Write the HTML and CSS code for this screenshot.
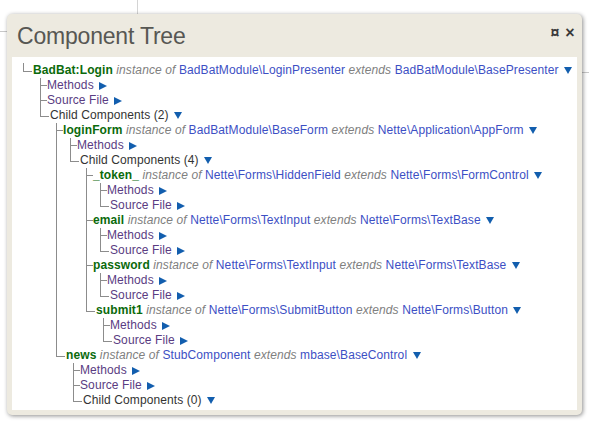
FILE: index.html
```html
<!DOCTYPE html>
<html>
<head>
<meta charset="utf-8">
<link rel="stylesheet" href="styles.css">
</head>
<body>
<div class="panel">
  <div class="head">
    <h1>Component Tree</h1>
    <div class="ctl"><a class="pin">¤</a><a class="close">×</a></div>
  </div>
  <div class="content">
    <ul class="tree root">
      <li class="last"><span class="c"></span><div class="b">
        <div class="l"><span class="n">BadBat:Login</span> <i>instance of</i> <span class="k">BadBatModule\LoginPresenter</span> <i>extends</i> <span class="k">BadBatModule\BasePresenter</span> <a class="t d"></a></div>
        <ul class="tree">
          <li><span class="c"></span><div class="b"><div class="l"><span class="m">Methods</span> <a class="t r"></a></div></div></li>
          <li><span class="c"></span><div class="b"><div class="l"><span class="m">Source File</span> <a class="t r"></a></div></div></li>
          <li class="last"><span class="c"></span><div class="b">
            <div class="l"><span class="cc">Child Components (2)</span> <a class="t d"></a></div>
            <ul class="tree sub">
              <li><span class="c"></span><div class="b">
                <div class="l"><span class="n">loginForm</span> <i>instance of</i> <span class="k">BadBatModule\BaseForm</span> <i>extends</i> <span class="k">Nette\Application\AppForm</span> <a class="t d"></a></div>
                <ul class="tree">
                  <li><span class="c"></span><div class="b"><div class="l"><span class="m">Methods</span> <a class="t r"></a></div></div></li>
                  <li class="last"><span class="c"></span><div class="b">
                    <div class="l"><span class="cc">Child Components (4)</span> <a class="t d"></a></div>
                    <ul class="tree sub">
                      <li><span class="c"></span><div class="b">
                        <div class="l"><span class="n">_token_</span> <i>instance of</i> <span class="k">Nette\Forms\HiddenField</span> <i>extends</i> <span class="k">Nette\Forms\FormControl</span> <a class="t d"></a></div>
                        <ul class="tree">
                          <li><span class="c"></span><div class="b"><div class="l"><span class="m">Methods</span> <a class="t r"></a></div></div></li>
                          <li class="last"><span class="c"></span><div class="b"><div class="l"><span class="m">Source File</span> <a class="t r"></a></div></div></li>
                        </ul>
                      </div></li>
                      <li><span class="c"></span><div class="b">
                        <div class="l"><span class="n">email</span> <i>instance of</i> <span class="k">Nette\Forms\TextInput</span> <i>extends</i> <span class="k">Nette\Forms\TextBase</span> <a class="t d"></a></div>
                        <ul class="tree">
                          <li><span class="c"></span><div class="b"><div class="l"><span class="m">Methods</span> <a class="t r"></a></div></div></li>
                          <li class="last"><span class="c"></span><div class="b"><div class="l"><span class="m">Source File</span> <a class="t r"></a></div></div></li>
                        </ul>
                      </div></li>
                      <li><span class="c"></span><div class="b">
                        <div class="l"><span class="n">password</span> <i>instance of</i> <span class="k">Nette\Forms\TextInput</span> <i>extends</i> <span class="k">Nette\Forms\TextBase</span> <a class="t d"></a></div>
                        <ul class="tree">
                          <li><span class="c"></span><div class="b"><div class="l"><span class="m">Methods</span> <a class="t r"></a></div></div></li>
                          <li class="last"><span class="c"></span><div class="b"><div class="l"><span class="m">Source File</span> <a class="t r"></a></div></div></li>
                        </ul>
                      </div></li>
                      <li class="last"><span class="c"></span><div class="b">
                        <div class="l"><span class="n">submit1</span> <i>instance of</i> <span class="k">Nette\Forms\SubmitButton</span> <i>extends</i> <span class="k">Nette\Forms\Button</span> <a class="t d"></a></div>
                        <ul class="tree">
                          <li><span class="c"></span><div class="b"><div class="l"><span class="m">Methods</span> <a class="t r"></a></div></div></li>
                          <li class="last"><span class="c"></span><div class="b"><div class="l"><span class="m">Source File</span> <a class="t r"></a></div></div></li>
                        </ul>
                      </div></li>
                    </ul>
                  </div></li>
                </ul>
              </div></li>
              <li class="last"><span class="c"></span><div class="b">
                <div class="l"><span class="n">news</span> <i>instance of</i> <span class="k">StubComponent</span> <i>extends</i> <span class="k">mbase\BaseControl</span> <a class="t d"></a></div>
                <ul class="tree">
                  <li><span class="c"></span><div class="b"><div class="l"><span class="m">Methods</span> <a class="t r"></a></div></div></li>
                  <li><span class="c"></span><div class="b"><div class="l"><span class="m">Source File</span> <a class="t r"></a></div></div></li>
                  <li class="last"><span class="c"></span><div class="b"><div class="l"><span class="cc">Child Components (0)</span> <a class="t d"></a></div></div></li>
                </ul>
              </div></li>
            </ul>
          </div></li>
        </ul>
      </div></li>
    </ul>
  </div>
</div>
</body>
</html>
```

FILE: styles.css
```css
html, body {
  margin: 0;
  padding: 0;
}
body {
  width: 589px;
  height: 424px;
  overflow: hidden;
  background:
    linear-gradient(#d4d4d4, #d4d4d4) 137px 0 / 1px 14px no-repeat,
    linear-gradient(#c8c8c8, #c8c8c8) 0 31px / 8px 1px no-repeat,
    linear-gradient(#c8c8c8, #c8c8c8) 582px 72px / 7px 1px no-repeat,
    #ffffff;
  font-family: "Liberation Sans", Arial, sans-serif;
}
.panel {
  position: absolute;
  left: 7px;
  top: 14px;
  width: 575px;
  height: 401px;
  box-sizing: border-box;
  padding: 0 5px 5px 5px;
  background: #edeae0;
  border-radius: 5px;
  box-shadow: 1px 1px 4px rgba(0, 0, 0, 0.45);
  display: flex;
  flex-direction: column;
}
.head {
  height: 43px;
  display: flex;
  justify-content: space-between;
  align-items: flex-start;
  flex: none;
}
.head h1 {
  margin: 0;
  padding: 8px 0 0 5px;
  font-weight: normal;
  font-size: 23px;
  line-height: 28px;
  letter-spacing: -0.2px;
  color: #575753;
}
.ctl {
  display: flex;
  gap: 3px;
  padding: 11px 1px 0 0;
  font-weight: bold;
  font-size: 16px;
  line-height: 16px;
  color: #3a3a3a;
}
.ctl a {
  display: block;
  width: 12px;
  text-align: center;
}
.content {
  flex: 1;
  background: #ffffff;
  padding: 6px 0 0 11px;
  font-size: 12px;
  line-height: 15px;
  letter-spacing: 0.1px;
  color: #333;
}
.tree {
  list-style: none;
  margin: 0;
  padding: 0;
}
.tree .tree {
  margin-left: 7px;
}
.tree .tree.sub {
  margin-left: 6px;
}
.tree li {
  display: flex;
  align-items: flex-start;
  border-left: 1px solid #8c8c8c;
}
.tree li.last {
  border-left: 0;
}
.c {
  flex: none;
  width: 6px;
  height: 7px;
  border-bottom: 1px solid #8c8c8c;
}
li.last > .c {
  width: 8px;
  height: 8px;
  margin-right: 1px;
  border-left: 1px solid #8c8c8c;
}
.b {
  flex: 1;
  min-width: 0;
}
.l {
  white-space: nowrap;
  height: 15px;
}
.n {
  font-weight: bold;
  color: #0b6a0b;
}
i {
  color: #808080;
}
.k {
  color: #3c4fc4;
}
.m {
  color: #5a3c82;
}
.cc {
  color: #333;
}
.t {
  display: inline-block;
  width: 0;
  height: 0;
  margin-left: 2px;
}
.t.r {
  border-left: 8px solid #125eae;
  border-top: 4px solid transparent;
  border-bottom: 4px solid transparent;
  vertical-align: -1px;
}
.t.d {
  border-top: 7px solid #125eae;
  border-left: 4px solid transparent;
  border-right: 4px solid transparent;
  vertical-align: 0;
}
```
